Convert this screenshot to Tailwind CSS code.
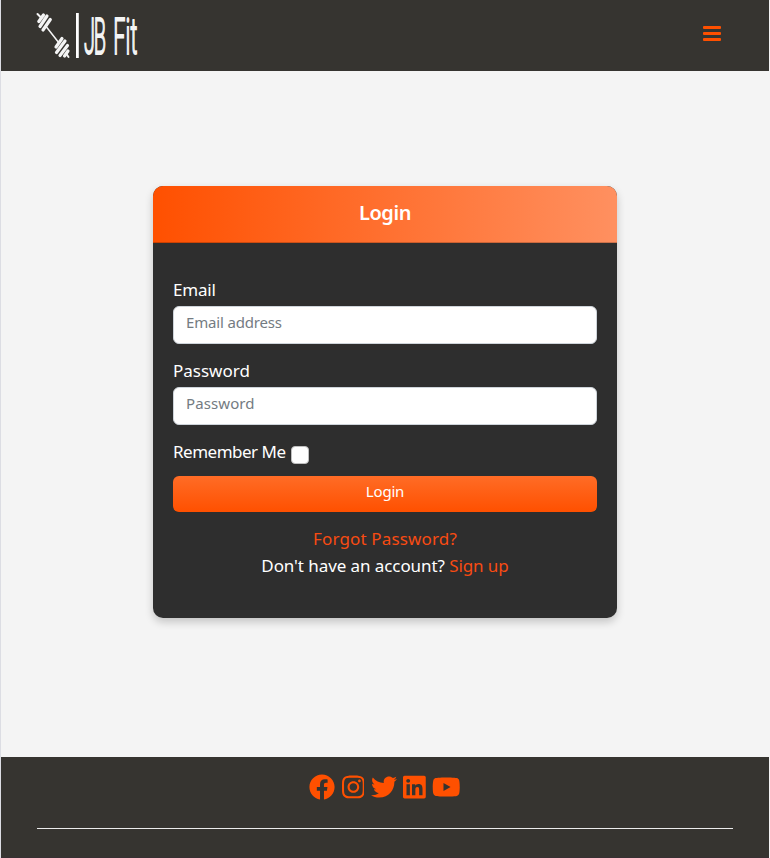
<!DOCTYPE html>
<html lang="en">
<head>
<meta charset="utf-8">
<title>JB Fit - Login</title>
<script src="https://cdn.jsdelivr.net/npm/@tailwindcss/browser@4"></script>
</head>
<body class="h-[858px] overflow-hidden bg-[#f4f4f4] font-['Noto_Sans',sans-serif] text-white">
<div class="flex h-full flex-col border-x border-l-[#dcdde3] border-r-[#f4f4f4]">
  <header class="flex h-[71px] shrink-0 items-start justify-between bg-[#363430] pl-[35px] pr-[48px]">
    <svg class="mt-3 h-[47px] w-[102px] overflow-visible" viewBox="0 0 102 47" aria-label="JB Fit">
      <g stroke="#f4f4f4" stroke-linecap="round" fill="none">
        <path d="M1.500 2l4 4M30.500 42l2 3" stroke-width="2"/>
        <path d="M10.500 15L23 31" stroke-width="1.500"/>
        <path d="M2.800 9.500l4.700-6.500M4 14.500l7-10.500M7 18l7.300-10.500M20 35l6-8.500M20.500 40.500l8.500-11.500M24 43.500l7.500-10M28.500 44l3.500-5" stroke-width="3.200"/>
      </g>
      <path d="M40 1h2.800v45H40z" fill="#fff"/>
      <g fill="#f4f4f4" stroke="#f4f4f4" stroke-width="1.800" font-family="Roboto" font-weight="300" font-size="50">
        <text transform="translate(48 41.500) scale(.4 1)" textLength="55" lengthAdjust="spacing">JB</text>
        <text transform="translate(77.300 41.500) scale(.43 1)" textLength="56" lengthAdjust="spacing">Fit</text>
      </g>
    </svg>
    <svg class="mt-[26px] h-[15px] w-[18px]" viewBox="0 0 18 15" fill="#ff5000"><rect width="18" height="3" rx="1"/><rect y="6" width="18" height="3" rx="1"/><rect y="12" width="18" height="3" rx="1"/></svg>
  </header>

  <main class="flex flex-1 items-start justify-center pt-[115px]">
    <section class="h-[432px] w-[464px] overflow-hidden rounded-[10px] bg-[#2e2e2e] shadow-[0_4px_8px_rgba(0,0,0,0.2)]">
      <h1 class="h-[57px] border-b border-black/20 bg-[linear-gradient(90deg,#ff5000,#ff9060)] text-center text-[20px] leading-[54px] font-semibold tracking-[-0.4px]">Login</h1>
      <form class="px-5 pt-[33px] text-[17px] leading-[27px]">
        <label class="block"><span class="inline-block tracking-[-0.2px]">Email</span>
          <input class="mt-[3px] block h-[38px] w-full rounded-md border border-[#ced4da] bg-white px-3 pb-[6px] text-[15px] tracking-[-0.17px] placeholder:text-[#747b82]" type="email" placeholder="Email address"></label>
        <label class="mt-[13px] block"><span class="inline-block">Password</span>
          <input class="mt-[3px] block h-[38px] w-full rounded-md border border-[#ced4da] bg-white px-3 pb-[6px] text-[15px] tracking-[0.1px] placeholder:text-[#747b82]" type="password" placeholder="Password"></label>
        <label class="mt-[13px] flex h-[27px]"><span class="w-[118px] tracking-[-0.5px] whitespace-nowrap">Remember Me</span>
          <input class="mt-[8px] size-[18px] appearance-none rounded border border-[#bfbfbf] bg-white" type="checkbox"></label>
        <button class="mt-[11px] block h-9 w-full rounded-md bg-[linear-gradient(#ff6c26,#ff5000)] pb-[5px] text-[15px] leading-[31px] tracking-[-0.2px]" type="button">Login</button>
        <div class="mt-[13px] text-center">
          <a class="block tracking-[0.15px] text-[#f84b12]">Forgot Password?</a>
          <p class="tracking-[-0.08px]">Don't have an account? <a class="text-[#f84b12]">Sign up</a></p>
        </div>
      </form>
    </section>
  </main>

  <footer class="h-[101px] shrink-0 border-b border-[#383033] bg-[#363430] px-9 pt-[17px]">
    <div class="flex h-[26px] justify-center gap-[6.400px] text-[#ff5000]">
      <svg class="h-[26px] w-[26px]" viewBox="0 0 512 512" fill="currentColor"><path d="M504 256C504 119 393 8 256 8S8 119 8 256c0 123.780 90.690 226.380 209.250 245V327.690h-63V256h63v-54.640c0-62.150 37-96.480 93.670-96.480 27.140 0 55.520 4.840 55.520 4.840v61h-31.280c-30.800 0-40.410 19.120-40.410 38.730V256h68.780l-11 71.690h-57.780V501C413.310 482.380 504 379.780 504 256z"/></svg>
      <svg class="h-[26px] w-[22.750px]" viewBox="0 0 448 512" fill="currentColor"><path d="M224.100 141c-63.600 0-114.900 51.300-114.900 114.900s51.300 114.900 114.900 114.900S339 319.500 339 255.900 287.700 141 224.100 141zm0 189.600c-41.100 0-74.700-33.500-74.700-74.700s33.500-74.700 74.700-74.700 74.700 33.500 74.700 74.700-33.600 74.700-74.700 74.700zm146.400-194.300c0 14.900-12 26.800-26.800 26.800-14.900 0-26.800-12-26.800-26.800s12-26.800 26.800-26.800 26.800 12 26.800 26.800zm76.100 27.200c-1.700-35.900-9.900-67.700-36.200-93.900-26.200-26.200-58-34.400-93.900-36.200-37-2.100-147.900-2.100-184.900 0-35.800 1.700-67.600 9.900-93.900 36.100s-34.400 58-36.200 93.900c-2.100 37-2.100 147.900 0 184.900 1.700 35.900 9.900 67.700 36.200 93.900s58 34.400 93.900 36.200c37 2.100 147.900 2.100 184.900 0 35.900-1.700 67.700-9.900 93.900-36.200 26.200-26.200 34.400-58 36.200-93.900 2.100-37 2.100-147.800 0-184.800zM398.800 388c-7.800 19.600-22.900 34.700-42.600 42.600-29.500 11.700-99.500 9-132.100 9s-102.700 2.600-132.100-9c-19.600-7.800-34.700-22.900-42.600-42.600-11.700-29.500-9-99.500-9-132.100s-2.600-102.700 9-132.100c7.800-19.600 22.900-34.700 42.600-42.600 29.500-11.700 99.500-9 132.100-9s102.700-2.600 132.100 9c19.600 7.800 34.700 22.900 42.600 42.600 11.700 29.500 9 99.500 9 132.100s2.700 102.700-9 132.100z"/></svg>
      <svg class="h-[26px] w-[26px]" viewBox="0 0 512 512" fill="currentColor"><path d="M459.370 151.716c.325 4.548.325 9.097.325 13.645 0 138.720-105.583 298.558-298.558 298.558-59.452 0-114.680-17.219-161.137-47.106 8.447.974 16.568 1.299 25.340 1.299 49.055 0 94.213-16.568 130.274-44.832-46.132-.975-84.792-31.188-98.112-72.772 6.498.974 12.995 1.624 19.818 1.624 9.421 0 18.843-1.300 27.614-3.573-48.081-9.747-84.143-51.980-84.143-102.985v-1.299c13.969 7.797 30.214 12.670 47.431 13.319-28.264-18.843-46.781-51.005-46.781-87.391 0-19.492 5.197-37.360 14.294-52.954 51.655 63.675 129.300 105.258 216.365 109.807-1.624-7.797-2.599-15.918-2.599-24.040 0-57.828 46.782-104.934 104.934-104.934 30.213 0 57.502 12.670 76.670 33.137 23.715-4.548 46.456-13.320 66.599-25.340-7.798 24.366-24.366 44.833-46.132 57.827 21.117-2.273 41.584-8.122 60.426-16.243-14.292 20.791-32.161 39.308-52.628 54.253z"/></svg>
      <svg class="h-[26px] w-[22.750px]" viewBox="0 0 448 512" fill="currentColor"><path d="M416 32H31.900C14.300 32 0 46.500 0 64.300v383.400C0 465.500 14.300 480 31.900 480H416c17.600 0 32-14.500 32-32.300V64.300c0-17.800-14.400-32.300-32-32.300zM135.400 416H69V202.200h66.500V416zm-33.200-243c-21.300 0-38.500-17.300-38.500-38.500S80.900 96 102.200 96c21.200 0 38.500 17.300 38.500 38.500 0 21.300-17.200 38.500-38.500 38.500zm282.100 243h-66.400V312c0-24.800-.5-56.700-34.500-56.700-34.600 0-39.900 27-39.900 54.900V416h-66.400V202.200h63.700v29.200h.9c8.900-16.800 30.600-34.500 62.900-34.500 67.200 0 79.700 44.300 79.700 101.900V416z"/></svg>
      <svg class="h-[26px] w-[28.500px]" viewBox="0 0 576 512" fill="currentColor"><path d="M549.655 124.083c-6.281-23.650-24.787-42.276-48.284-48.597C458.781 64 288 64 288 64S117.220 64 74.629 75.486c-23.497 6.322-42.003 24.947-48.284 48.597-11.412 42.867-11.412 132.305-11.412 132.305s0 89.438 11.412 132.305c6.281 23.650 24.787 41.500 48.284 47.821C117.220 448 288 448 288 448s170.780 0 213.371-11.486c23.497-6.321 42.003-24.171 48.284-47.821 11.412-42.867 11.412-132.305 11.412-132.305s0-89.438-11.412-132.305zm-317.510 213.508V175.185l142.739 81.205-142.739 81.201z"/></svg>
    </div>
    <hr class="mt-[28px] border-t border-[#ebebeb]">
  </footer>
</div>
</body>
</html>
